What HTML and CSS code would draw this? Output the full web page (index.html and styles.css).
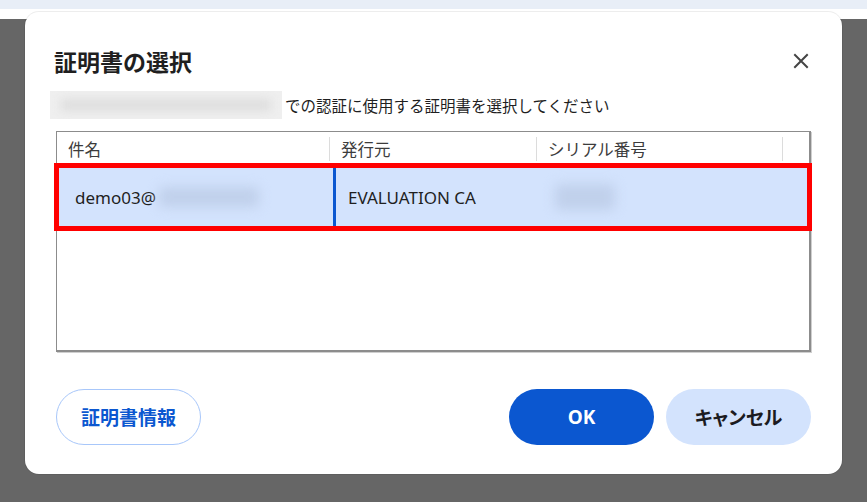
FILE: index.html
```html
<!DOCTYPE html>
<html lang="ja">
<head>
<meta charset="utf-8">
<title>証明書の選択</title>
<link rel="stylesheet" href="styles.css">
</head>
<body>
<div class="topbar"></div>
<div class="gap"></div>
<div class="overlay"></div>

<div class="dialog" role="dialog">
  <div class="title-row">
    <h1 class="title">証明書の選択</h1>
    <svg class="close" width="16" height="16" viewBox="0 0 16 16" aria-label="閉じる">
      <path d="M2 2 L14 14 M14 2 L2 14" stroke="#444" stroke-width="2" stroke-linecap="square" fill="none"/>
    </svg>
  </div>
  <div class="subtitle">
    <div class="redact redact-host"><div class="redact-core"></div></div>
    <span>での認証に使用する証明書を選択してください</span>
  </div>

  <div class="table">
    <div class="thead">
      <div class="th first">件名</div>
      <div class="th">発行元</div>
      <div class="th">シリアル番号</div>
      <div class="th last"></div>
    </div>
    <div class="row selected">
      <div class="td first"><span>demo03@</span><div class="blur blur-mail"></div></div>
      <div class="td focus">EVALUATION CA</div>
      <div class="td serial"><div class="blur blur-serial"></div></div>
      <div class="td"></div>
    </div>
  </div>

  <div class="actions">
    <button class="btn btn-outline">証明書情報</button>
    <div class="spacer"></div>
    <button class="btn btn-primary">OK</button>
    <button class="btn btn-tonal">キャンセル</button>
  </div>
</div>
</body>
</html>
```

FILE: styles.css
```css
html, body {
  margin: 0;
  padding: 0;
  height: 100%;
}
body {
  background: #666666;
  font-family: "Noto Sans", "Noto Sans CJK JP", sans-serif;
  color: #1f1f1f;
  overflow: hidden;
}
.topbar {
  height: 9px;
  background: #e8eef7;
}
.gap {
  height: 10px;
  background: #ffffff;
}
.overlay {
  height: 483px;
  background: #666666;
}

.dialog {
  position: absolute;
  left: 25px;
  top: 12px;
  width: 817px;
  height: 462px;
  box-sizing: border-box;
  background: #ffffff;
  border-radius: 14px;
  box-shadow: 0 0 0 1px rgba(0,0,0,0.07);
  padding: 34px 31px 0 31px;
  display: flex;
  flex-direction: column;
}

.title-row {
  display: flex;
  align-items: center;
  justify-content: space-between;
  height: 30px;
  padding-right: 2px;
}
.title {
  margin: 0 0 0 -2px;
  font-family: "Noto Sans CJK JP", sans-serif;
  font-size: 23px;
  font-weight: 700;
  line-height: 30px;
  color: #1f1f1f;
}
.close {
  display: block;
}

.subtitle {
  margin-top: 15px;
  margin-left: -6px;
  height: 28px;
  display: flex;
  align-items: center;
  font-family: "Noto Sans CJK JP", sans-serif;
  font-size: 15.5px;
  line-height: 28px;
  color: #1f1f1f;
}
.redact-host {
  width: 232px;
  height: 28px;
  background: #efefef;
  margin-right: 3px;
  overflow: hidden;
  display: flex;
  align-items: center;
  justify-content: center;
}
.redact-core {
  width: 210px;
  height: 12px;
  background: #dedede;
  filter: blur(5px);
}

.table {
  margin-top: 12px;
  height: 221px;
  box-sizing: border-box;
  border: 1px solid #8c8c8c;
  border-right: 2px solid #8c8c8c;
  border-bottom: 2px solid #8c8c8c;
  box-shadow: 1px 1px 0 #cfcfcf;
}
.thead, .row {
  display: grid;
  grid-template-columns: 272px 207px 246px 1fr;
}
.thead {
  height: 34px;
  align-items: center;
}
.th {
  height: 24px;
  line-height: 24px;
  border-left: 1px solid #dcdcdc;
  padding-left: 11px;
  font-family: "Noto Sans CJK JP", sans-serif;
  font-size: 16.5px;
  color: #3c3c3c;
}
.th.first {
  border-left: none;
}

.row.selected {
  height: 62px;
  background: #d3e3fd;
  outline: 5px solid #ff0000;
  outline-offset: -2px;
  align-items: center;
}
.td {
  height: 100%;
  display: flex;
  align-items: center;
  font-size: 17px;
  color: #1f1f1f;
  box-sizing: border-box;
}
.td.first {
  padding-left: 18px;
}
.td.focus {
  margin-left: 4px;
  border-left: 3px solid #0b57d0;
  padding-left: 12px;
}
.td.serial {
  padding-left: 19px;
}
.blur {
  background: #c0d0eb;
  filter: blur(6px);
  border-radius: 4px;
}
.blur-mail {
  width: 100px;
  height: 20px;
  margin-left: 3px;
}
.blur-serial {
  width: 60px;
  height: 26px;
}

.actions {
  margin-top: 37px;
  display: flex;
  align-items: center;
}
.spacer {
  flex: 1;
}
.btn {
  height: 56px;
  width: 145px;
  border-radius: 28px;
  font-family: "Noto Sans", "Noto Sans CJK JP", sans-serif;
  font-size: 19px;
  font-weight: 700;
  cursor: pointer;
  box-sizing: border-box;
  padding: 0;
}
.btn-outline {
  width: 145px;
  background: #ffffff;
  border: 1.5px solid #a8c7fa;
  color: #0b57d0;
}
.btn-primary {
  background: #0b57d0;
  border: none;
  color: #ffffff;
}
.btn-tonal {
  margin-left: 12px;
  background: #d3e3fd;
  border: none;
  color: #1b1b1f;
  font-feature-settings: "palt";
}
```
